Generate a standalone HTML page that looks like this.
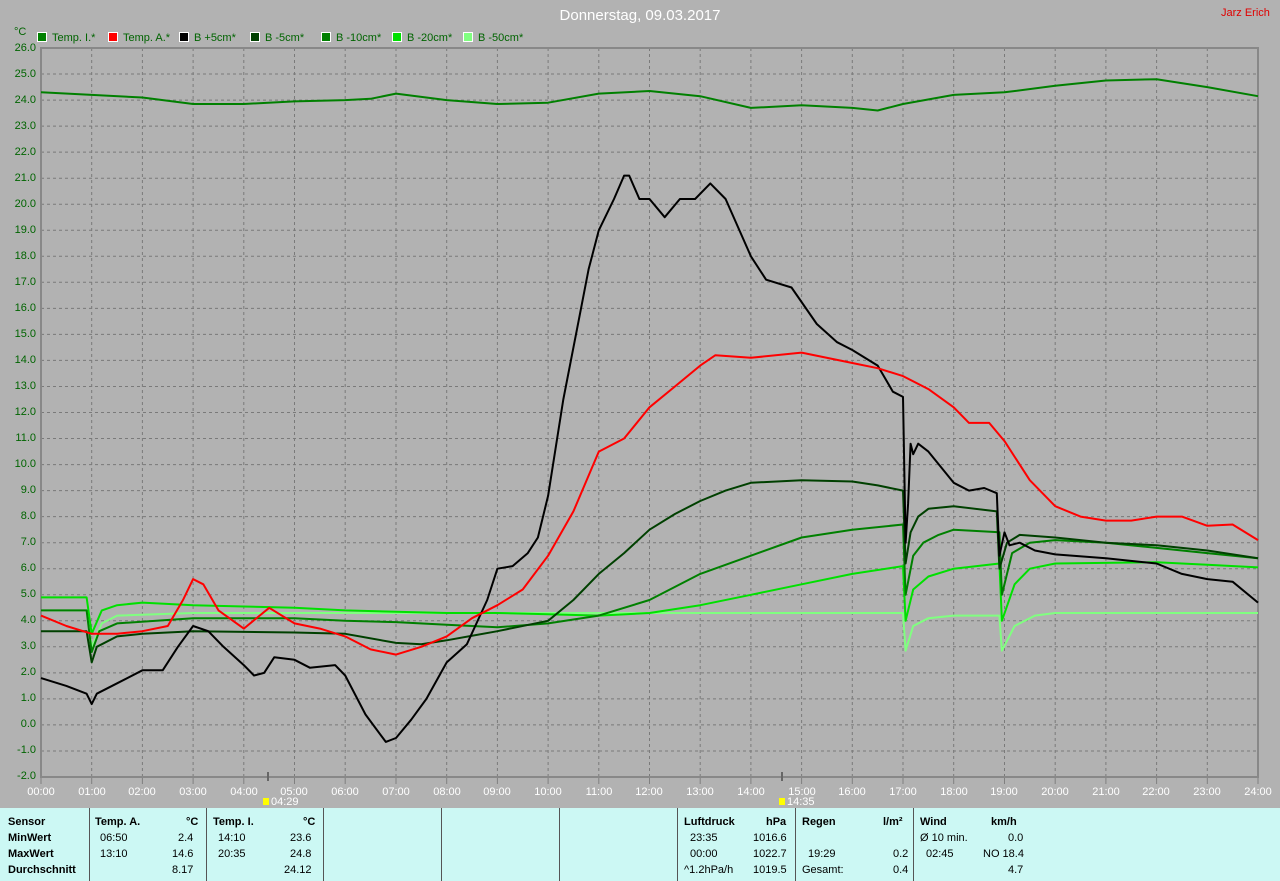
<!DOCTYPE html>
<html><head><meta charset="utf-8"><style>
body{margin:0;width:1280px;height:881px;background:#b2b2b2;position:relative;overflow:hidden;font-family:"Liberation Sans",sans-serif;}
.t{position:absolute;font-size:11px;white-space:nowrap;}
.yl{position:absolute;right:1244px;font-size:11px;color:#006400;text-align:right;}
.xl{position:absolute;top:786px;font-size:11px;color:#fff;width:40px;text-align:center;}
.lg{position:absolute;top:32px;font-size:11px;color:#006400;}
.lg i{display:inline-block;width:8px;height:8px;border:1px solid #fff;margin-right:5px;vertical-align:-1px;}
#tb{position:absolute;left:0;top:808px;width:1280px;height:73px;background:#ccf8f4;}
.c{position:absolute;top:0;height:73px;border-left:1px solid #555;}
.r{position:absolute;font-size:11px;color:#000;}
.b{font-weight:bold;}
</style></head><body>
<div class="t" style="left:0;width:1280px;text-align:center;top:7px;font-size:15px;color:#fff">Donnerstag, 09.03.2017</div>
<div class="t" style="left:1221px;top:7px;color:#e00000">Jarz Erich</div>
<div class="t" style="left:14px;top:26px;color:#006400">°C</div>
<div class="lg" style="left:37px"><i style="background:#008000"></i>Temp. I.*</div>
<div class="lg" style="left:108px"><i style="background:#f00"></i>Temp. A.*</div>
<div class="lg" style="left:179px"><i style="background:#000"></i>B +5cm*</div>
<div class="lg" style="left:250px"><i style="background:#004000"></i>B -5cm*</div>
<div class="lg" style="left:321px"><i style="background:#008000"></i>B -10cm*</div>
<div class="lg" style="left:392px"><i style="background:#00e000"></i>B -20cm*</div>
<div class="lg" style="left:463px"><i style="background:#80ff80"></i>B -50cm*</div>
<div class="yl" style="top:42px">26.0</div><div class="yl" style="top:68px">25.0</div><div class="yl" style="top:94px">24.0</div><div class="yl" style="top:120px">23.0</div><div class="yl" style="top:146px">22.0</div><div class="yl" style="top:172px">21.0</div><div class="yl" style="top:198px">20.0</div><div class="yl" style="top:224px">19.0</div><div class="yl" style="top:250px">18.0</div><div class="yl" style="top:276px">17.0</div><div class="yl" style="top:302px">16.0</div><div class="yl" style="top:328px">15.0</div><div class="yl" style="top:354px">14.0</div><div class="yl" style="top:380px">13.0</div><div class="yl" style="top:406px">12.0</div><div class="yl" style="top:432px">11.0</div><div class="yl" style="top:458px">10.0</div><div class="yl" style="top:484px">9.0</div><div class="yl" style="top:510px">8.0</div><div class="yl" style="top:536px">7.0</div><div class="yl" style="top:562px">6.0</div><div class="yl" style="top:588px">5.0</div><div class="yl" style="top:614px">4.0</div><div class="yl" style="top:640px">3.0</div><div class="yl" style="top:666px">2.0</div><div class="yl" style="top:692px">1.0</div><div class="yl" style="top:718px">0.0</div><div class="yl" style="top:744px">-1.0</div><div class="yl" style="top:770px">-2.0</div>
<div class="xl" style="left:21px">00:00</div><div class="xl" style="left:72px">01:00</div><div class="xl" style="left:122px">02:00</div><div class="xl" style="left:173px">03:00</div><div class="xl" style="left:224px">04:00</div><div class="xl" style="left:274px">05:00</div><div class="xl" style="left:325px">06:00</div><div class="xl" style="left:376px">07:00</div><div class="xl" style="left:427px">08:00</div><div class="xl" style="left:477px">09:00</div><div class="xl" style="left:528px">10:00</div><div class="xl" style="left:579px">11:00</div><div class="xl" style="left:629px">12:00</div><div class="xl" style="left:680px">13:00</div><div class="xl" style="left:731px">14:00</div><div class="xl" style="left:782px">15:00</div><div class="xl" style="left:832px">16:00</div><div class="xl" style="left:883px">17:00</div><div class="xl" style="left:934px">18:00</div><div class="xl" style="left:984px">19:00</div><div class="xl" style="left:1035px">20:00</div><div class="xl" style="left:1086px">21:00</div><div class="xl" style="left:1136px">22:00</div><div class="xl" style="left:1187px">23:00</div><div class="xl" style="left:1238px">24:00</div>
<div class="t" style="left:271px;top:796px;color:#fff">04:29</div>
<div class="t" style="left:787px;top:796px;color:#fff">14:35</div>
<div style="position:absolute;left:263px;top:798px;width:6px;height:7px;background:#ff0"></div>
<div style="position:absolute;left:779px;top:798px;width:6px;height:7px;background:#ff0"></div>
<svg id="s" width="1280" height="881" style="position:absolute;left:0;top:0"></svg>
<div id="tb">
<div class="c" style="left:89px"></div><div class="c" style="left:206px"></div><div class="c" style="left:323px"></div><div class="c" style="left:441px"></div><div class="c" style="left:559px"></div><div class="c" style="left:677px"></div><div class="c" style="left:795px"></div><div class="c" style="left:913px"></div>
<div class="r b" style="left:8px;top:8px">Sensor</div><div class="r b" style="left:8px;top:24px">MinWert</div><div class="r b" style="left:8px;top:40px">MaxWert</div><div class="r b" style="left:8px;top:56px">Durchschnitt</div>
<div class="r b" style="left:95px;top:8px">Temp. A.</div><div class="r b" style="left:186px;top:8px">°C</div>
<div class="r" style="left:100px;top:24px">06:50</div><div class="r" style="left:178px;top:24px">2.4</div>
<div class="r" style="left:100px;top:40px">13:10</div><div class="r" style="left:172px;top:40px">14.6</div>
<div class="r" style="left:172px;top:56px">8.17</div>
<div class="r b" style="left:213px;top:8px">Temp. I.</div><div class="r b" style="left:303px;top:8px">°C</div>
<div class="r" style="left:218px;top:24px">14:10</div><div class="r" style="left:290px;top:24px">23.6</div>
<div class="r" style="left:218px;top:40px">20:35</div><div class="r" style="left:290px;top:40px">24.8</div>
<div class="r" style="left:284px;top:56px">24.12</div>
<div class="r b" style="left:684px;top:8px">Luftdruck</div><div class="r b" style="left:766px;top:8px">hPa</div>
<div class="r" style="left:690px;top:24px">23:35</div><div class="r" style="left:753px;top:24px">1016.6</div>
<div class="r" style="left:690px;top:40px">00:00</div><div class="r" style="left:753px;top:40px">1022.7</div>
<div class="r" style="left:684px;top:56px">^1.2hPa/h</div><div class="r" style="left:753px;top:56px">1019.5</div>
<div class="r b" style="left:802px;top:8px">Regen</div><div class="r b" style="left:883px;top:8px">l/m²</div>
<div class="r" style="left:808px;top:40px">19:29</div><div class="r" style="left:893px;top:40px">0.2</div>
<div class="r" style="left:802px;top:56px">Gesamt:</div><div class="r" style="left:893px;top:56px">0.4</div>
<div class="r b" style="left:920px;top:8px">Wind</div><div class="r b" style="left:991px;top:8px">km/h</div>
<div class="r" style="left:920px;top:24px">Ø 10 min.</div><div class="r" style="left:1008px;top:24px">0.0</div>
<div class="r" style="left:926px;top:40px">02:45</div><div class="r" style="left:983px;top:40px">NO 18.4</div>
<div class="r" style="left:1008px;top:56px">4.7</div>
</div>
<script>
var s=document.getElementById('s'),h='';
function X(t){return 41+t*50.708}function Y(v){return 48+(26-v)*26.036}
var g='';for(var k=1;k<=28;k++){g+='M41 '+Y(26-k).toFixed(1)+'H1258';}
for(var t=1;t<24;t++){g+='M'+X(t).toFixed(1)+' 48V777';}
h+='<path d="'+g+'" stroke="#7a7a7a" stroke-width="1" stroke-dasharray="3,3" fill="none"/>';
var tk='';for(var t=0;t<=24;t++){tk+='M'+X(t).toFixed(1)+' 777V784';}
h+='<path d="'+tk+'" stroke="#808080" fill="none"/>';
h+='<path d="M40 48H1259M41 47V778M40 777H1259M1258 48V778" stroke="#888" stroke-width="2" fill="none"/>';
h+='<path d="M268 772V781M782 772V781" stroke="#666" stroke-width="2"/>';
function L(d,c){var p='';for(var i=0;i<d.length;i+=2)p+=(i?'L':'M')+X(d[i]).toFixed(1)+' '+Y(d[i+1]).toFixed(1);h+='<path d="'+p+'" stroke="'+c+'" stroke-width="2" fill="none" stroke-linejoin="round"/>';}
L([0,4.4,0.9,4.4,1.0,3.0,1.2,3.9,1.5,4.2,3,4.3,17,4.3,17.05,2.85,17.2,3.8,17.5,4.1,18,4.2,18.9,4.2,18.95,2.85,19.2,3.8,19.6,4.2,20,4.3,24,4.3],'#80ff80');
L([0,4.9,0.9,4.9,1.0,3.5,1.2,4.4,1.5,4.6,2,4.7,3,4.6,4,4.55,5,4.5,6,4.4,7,4.35,8,4.3,9,4.3,10,4.25,11,4.2,12,4.3,13,4.6,14,5.0,15,5.4,16,5.8,17,6.1,17.05,4.0,17.2,5.2,17.5,5.7,18,6.0,18.9,6.2,18.95,4.0,19.2,5.4,19.5,6.0,20,6.2,22,6.25,23,6.15,24,6.05],'#00e000');
L([0,4.4,0.9,4.4,1.0,2.8,1.15,3.6,1.5,3.9,3,4.1,5,4.1,6,4.0,7,3.95,8,3.85,9,3.75,10,3.9,11,4.2,12,4.8,13,5.8,14,6.5,15,7.2,16,7.5,17,7.7,17.05,5.0,17.2,6.5,17.4,7.0,17.7,7.3,18,7.5,18.9,7.4,18.95,5.0,19.15,6.6,19.5,7.0,20,7.1,21,7.0,22,6.8,23,6.6,24,6.4],'#008000');
L([0,3.6,0.9,3.6,1.0,2.4,1.1,3.0,1.5,3.4,2,3.5,3,3.6,5,3.55,6,3.5,7,3.15,7.5,3.1,8,3.25,9,3.6,10,4.0,10.5,4.8,11,5.8,11.5,6.6,12,7.5,12.5,8.1,13,8.6,13.5,9.0,14,9.3,15,9.4,16,9.35,16.5,9.2,17,9.0,17.05,6.2,17.15,7.4,17.3,8.0,17.5,8.3,18,8.4,18.85,8.2,18.9,6.0,19.05,7.0,19.3,7.3,20,7.2,21,7.0,22,6.9,23,6.7,24,6.4],'#004000');
L([0,1.8,0.5,1.5,0.9,1.2,1.0,0.8,1.1,1.2,1.5,1.6,2,2.1,2.4,2.1,2.7,3.0,3,3.8,3.3,3.6,3.6,3.0,4,2.3,4.2,1.9,4.4,2.0,4.6,2.6,5,2.5,5.3,2.2,5.8,2.3,6,1.9,6.4,0.4,6.8,-0.65,7,-0.5,7.3,0.2,7.6,1.0,8,2.4,8.4,3.1,8.8,4.8,9,6.0,9.3,6.1,9.6,6.6,9.8,7.2,10,8.8,10.3,12.5,10.6,15.5,10.8,17.5,11,19.0,11.3,20.2,11.5,21.1,11.6,21.1,11.8,20.2,12,20.2,12.3,19.5,12.6,20.2,12.9,20.2,13.2,20.8,13.5,20.2,14,18.0,14.3,17.1,14.8,16.8,15.3,15.4,15.7,14.7,16,14.4,16.5,13.8,16.8,12.8,17,12.6,17.05,7.0,17.1,8.5,17.15,10.8,17.2,10.4,17.3,10.8,17.5,10.5,18,9.3,18.3,9.0,18.6,9.1,18.85,8.9,18.9,6.5,19.0,7.4,19.1,6.9,19.3,7.0,19.6,6.7,20,6.55,21,6.4,22,6.2,22.5,5.8,23,5.6,23.5,5.5,24,4.7],'#000');
L([0,4.2,0.5,3.8,1,3.5,1.5,3.5,2,3.6,2.5,3.8,2.8,4.8,3,5.6,3.2,5.4,3.5,4.4,4,3.7,4.5,4.5,5,3.9,5.5,3.7,6,3.4,6.5,2.9,7,2.7,7.5,3.0,8,3.4,8.5,4.1,9,4.6,9.5,5.2,10,6.5,10.5,8.2,11,10.5,11.5,11.0,12,12.2,12.5,13.0,13,13.8,13.3,14.2,14,14.1,15,14.3,16,13.9,16.5,13.7,17,13.4,17.5,12.9,18,12.2,18.3,11.6,18.7,11.6,19,10.9,19.5,9.4,20,8.4,20.5,8.0,21,7.85,21.5,7.85,22,8.0,22.5,8.0,23,7.65,23.5,7.7,24,7.1],'#f00');
L([0,24.3,1,24.2,2,24.1,3,23.85,4,23.85,5,23.95,6,24.0,6.5,24.05,7,24.25,8,24.0,9,23.85,10,23.9,11,24.25,12,24.35,13,24.15,14,23.7,15,23.8,16,23.7,16.5,23.6,17,23.85,18,24.2,19,24.3,20,24.55,21,24.75,22,24.8,23,24.5,24,24.15],'#008000');
s.innerHTML=h;
</script>
</body></html>
